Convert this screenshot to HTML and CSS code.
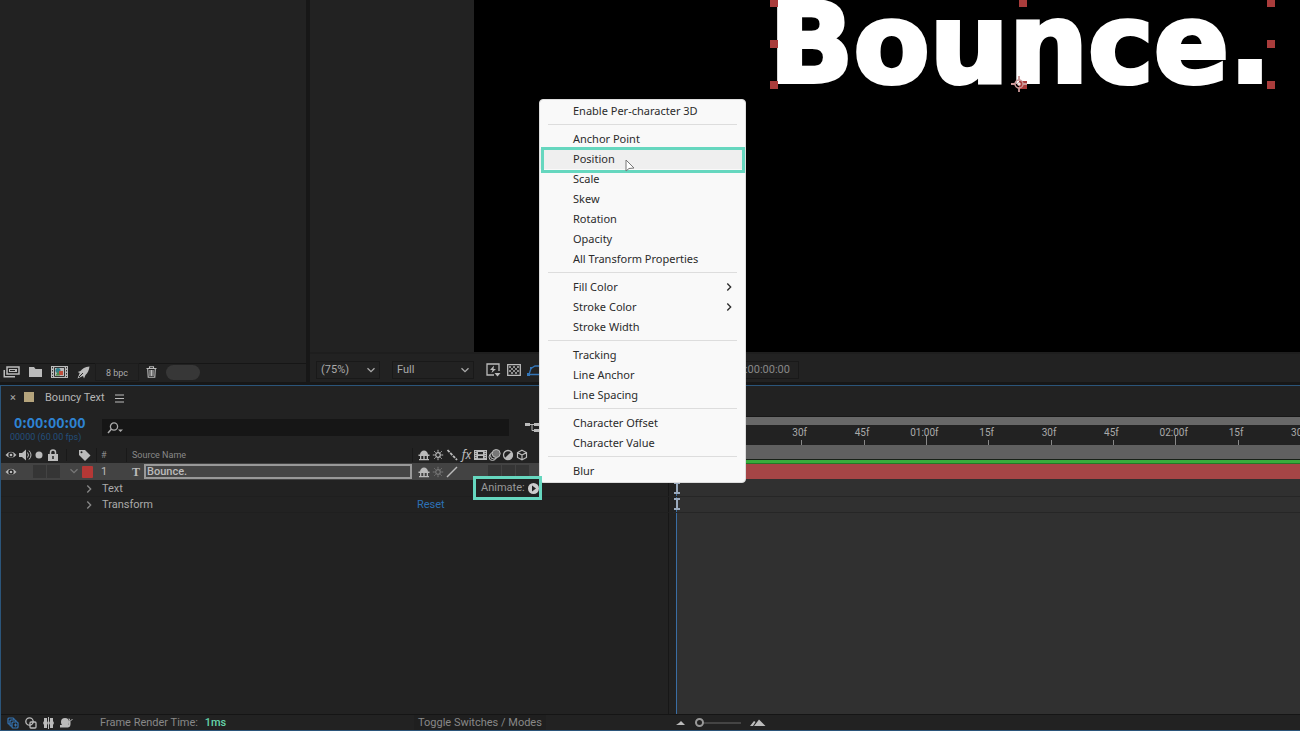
FILE: index.html
```html
<!DOCTYPE html>
<html lang="en">
<head>
<meta charset="utf-8">
<title>Bouncy Text</title>
<link rel="stylesheet" href="styles.css">
</head>
<body>
<svg class="defs" aria-hidden="true">
  <symbol id="eye" viewBox="0 0 12 12"><path d="M.5 6Q6-.5 11.500 6Q6 12 .5 6Z" fill="currentColor"/><circle cx="6" cy="6" r="2.700" fill="#222"/><circle cx="6" cy="6" r="1.300" fill="currentColor"/></symbol>
  <symbol id="shy" viewBox="0 0 12 12"><path d="M2 6C2 0 10 0 10 6ZM.5 5.500h11v1.500H.5ZM5.300 6h1.400v5H5.300ZM1 10h10v1.300H1ZM2 7h1.300v3H2ZM8.700 7H10v3H8.700Z" fill="currentColor"/></symbol>
  <symbol id="sun" viewBox="0 0 12 12"><circle cx="6" cy="6" r="2.300" fill="none" stroke="currentColor" stroke-width="1.200"/><path d="M6 .8v2M6 9.200v2M.8 6h2M9.200 6h2M2.300 2.300l1.300 1.300M8.400 8.400l1.300 1.300M9.700 2.300L8.400 3.600M3.600 8.400L2.300 9.700" stroke="currentColor"/></symbol>
  <symbol id="down" viewBox="0 0 10 10"><path d="M1.500 3.300L5 6.700l3.500-3.400" fill="none" stroke="currentColor" stroke-width="1.300"/></symbol>
  <symbol id="right" viewBox="0 0 10 10"><path d="M3.300 1.500L6.700 5 3.300 8.500" fill="none" stroke="currentColor" stroke-width="1.300"/></symbol>
  <symbol id="beam" viewBox="0 0 8 12"><path d="M1 1h6M1 11h6M4 1v10" stroke="currentColor" stroke-width="2"/></symbol>
</svg>
<div class="app">
  <section class="workspace">
    <aside class="project">
      <div class="project-list"></div>
      <div class="project-bar">
        <button class="icon" aria-label="Interpret footage"><svg width="17" height="12" viewBox="0 0 17 12"><path d="M4 1h12v7H4z" fill="none" stroke="currentColor" stroke-width="1.500"/><path d="M6 3h8v3H6zM2 4v6h10v1.500H.5V4Z" fill="currentColor"/><path d="M7 4.500h5" stroke="#222"/></svg></button>
        <button class="icon" aria-label="New folder"><svg width="13" height="12" viewBox="0 0 13 12"><path d="M0 1h5l1.500 2H13v8H0z" fill="currentColor"/></svg></button>
        <button class="icon" aria-label="New composition"><svg width="17" height="12" viewBox="0 0 17 12"><path d="M0 0h17v12H0z" fill="currentColor"/><path d="M1.500 1v10M15.500 1v10" stroke="#333" stroke-dasharray="1.500 1.500"/><path d="M3.500 1.500h10v9h-10z" fill="#bbb" stroke="#333"/><circle cx="7" cy="4.500" r="2.500" fill="#2f7f8b"/><path d="M8 5h4v4H8z" fill="#c24f3d"/><path d="M4.500 9.500l2.500-4 2 4z" fill="#4b8a4a"/></svg></button>
        <button class="icon" aria-label="Project settings"><svg width="13" height="13" viewBox="0 0 13 13"><path d="M12.500.5C8 .8 5 3 3.500 5L.7 6l2 1L.5 12.500 6 10l1 2.500L8.500 9C11 7 12 4 12.500.5Z" fill="currentColor"/><path d="M2 11l4-4" stroke="#222"/></svg></button>
        <button class="depth">8 bpc</button>
        <button class="icon" aria-label="Delete"><svg width="11" height="12" viewBox="0 0 11 12"><path d="M.5 2.500h10M3.500 2V.7h4V2M1.700 3l.5 8.300h6.600L9.300 3M4 4v6M5.500 4v6M7 4v6" fill="none" stroke="currentColor" stroke-width="1.100"/></svg></button>
        <span class="pill"></span>
      </div>
    </aside>
    <main class="viewer">
      <div class="stage">
        <div class="canvas">
          <div class="layer-box">
            <span class="title">Bounce.</span>
            <i class="handle tl"></i><i class="handle tc"></i><i class="handle tr"></i>
            <i class="handle ml"></i><i class="handle mr"></i>
            <i class="handle bl"></i><i class="handle bc"></i><i class="handle br"></i>
            <svg class="anchor" width="16" height="16" viewBox="0 0 16 16"><g fill="none" stroke="#c99"><circle cx="8" cy="8" r="4" stroke-width="1.500"/><circle cx="8" cy="8" r="1.500" fill="#fff"/><path d="M8 0v4M8 12v4M0 8h4M12 8h4" stroke-width="1.800"/></g></svg>
          </div>
        </div>
      </div>
      <div class="viewer-bar">
        <label class="drop zoom"><select aria-label="Magnification"><option>(75%)</option></select><svg width="10" height="10"><use href="#down"/></svg></label>
        <label class="drop res"><select aria-label="Resolution"><option>Full</option></select><svg width="10" height="10"><use href="#down"/></svg></label>
        <div class="tools">
          <button class="icon" aria-label="Fast previews"><svg width="15" height="14" viewBox="0 0 15 14"><path d="M8 12H1V1h12v7" fill="none" stroke="currentColor" stroke-width="1.300"/><path d="M8 2.500L4 7h2.500L5.500 10 10 6H7.500Z" fill="currentColor"/><path d="M8.500 10h6l-3 3.500z" fill="currentColor"/></svg></button>
          <button class="icon" aria-label="Transparency grid"><svg width="14" height="12" viewBox="0 0 14 12"><path d="M.7.700h12.600v10.600H.7z" fill="none" stroke="currentColor" stroke-width="1.300"/><path d="M2 2h2v2H2zM6 2h2v2H6zM10 2h2v2h-2zM4 4h2v2H4zM8 4h2v2H8zM2 6h2v2H2zM6 6h2v2H6zM10 6h2v2h-2zM4 8h2v2H4zM8 8h2v2H8z" fill="currentColor" opacity=".7"/></svg></button>
          <button class="icon blue" aria-label="Mask visibility"><svg width="14" height="12" viewBox="0 0 14 12"><path d="M2 10.500L4 4.500 8 2l5 0v8.500z" fill="none" stroke="currentColor" stroke-width="1.300"/><path d="M0 9h3v3H0zM3 3h2v2H3z" fill="currentColor"/></svg></button>
        </div>
        <button class="preview-time">0:00:00:00</button>
      </div>
    </main>
  </section>

  <section class="timeline">
    <div class="layers">
      <header class="tab">
        <button class="close" aria-label="Close tab">×</button>
        <span class="swatch"></span>
        <span class="comp-name">Bouncy Text</span>
        <button class="icon" aria-label="Panel menu"><svg width="9" height="9" viewBox="0 0 9 9"><path d="M0 1h9M0 4.500h9M0 8h9" stroke="currentColor" stroke-width="1.200"/></svg></button>
      </header>
      <div class="time-row">
        <div class="clock"><strong>0:00:00:00</strong><small>00000 (60.00 fps)</small></div>
        <label class="search"><svg width="16" height="12" viewBox="0 0 16 12"><circle cx="7" cy="4.500" r="3.600" fill="none" stroke="currentColor" stroke-width="1.300"/><path d="M4.500 7L1 11" stroke="currentColor" stroke-width="1.500"/><path d="M11 7.500h5L13.500 10z" fill="currentColor"/></svg><input type="text" aria-label="Search layers"></label>
        <button class="icon flow" aria-label="Mini flowchart"><svg width="16" height="13" viewBox="0 0 16 13"><path d="M0 2h5v3H0zM9 2h6v3H9zM9 8h6v3H9z" fill="currentColor"/><path d="M4 3.500h6M7 3.500V9.500h3" fill="none" stroke="currentColor"/></svg></button>
      </div>
      <div class="cols head">
        <div class="av">
          <svg width="12" height="12"><use href="#eye"/></svg>
          <svg width="13" height="12" viewBox="0 0 13 12"><path d="M0 4h3l4-3.500v11L3 8H0z" fill="currentColor"/><path d="M8.500 3.500q2 2.500 0 5M10 1.500q4 4.500 0 9" fill="none" stroke="currentColor"/></svg>
          <svg width="8" height="8" viewBox="0 0 8 8"><circle cx="4" cy="4" r="3.500" fill="currentColor"/></svg>
          <svg width="10" height="12" viewBox="0 0 10 12"><path d="M0 5h10v7H0z" fill="currentColor"/><path d="M2.500 5V3.500q0-2.500 2.500-2.500t2.500 2.500V5" fill="none" stroke="currentColor" stroke-width="1.500"/><path d="M5 7v3" stroke="#222" stroke-width="1.500"/></svg>
        </div>
        <div class="tag"><svg width="13" height="12" viewBox="0 0 13 12"><path d="M1 1h6l5.500 5.500L7 12 1 6z" fill="currentColor"/><circle cx="3.500" cy="3.300" r="1" fill="#222"/></svg></div>
        <div class="num small">#</div>
        <div class="name small">Source Name</div>
        <div class="switches">
          <svg width="12" height="12"><use href="#shy"/></svg>
          <svg width="12" height="12"><use href="#sun"/></svg>
          <svg width="12" height="12" viewBox="0 0 12 12"><path d="M1.500 1L11 11" stroke="currentColor" stroke-width="1.800" stroke-dasharray="3 1"/></svg>
          <em>fx</em>
          <svg width="13" height="12" viewBox="0 0 13 12"><path d="M0 1h13v10H0z" fill="currentColor"/><path d="M1.800 2v8M11.200 2v8" stroke="#333" stroke-dasharray="1 1"/><path d="M4 3h5v2.200H4zM4 7h5v2.200H4z" fill="#222"/></svg>
          <svg width="13" height="12" viewBox="0 0 13 12"><circle cx="4.500" cy="8" r="3.500" fill="none" stroke="currentColor"/><circle cx="6" cy="6.500" r="3.600" fill="#222" stroke="currentColor"/><circle cx="8.200" cy="4.500" r="4" fill="#777" stroke="currentColor"/></svg>
          <svg width="12" height="12" viewBox="0 0 12 12"><circle cx="6" cy="6" r="4.500" fill="#222" stroke="currentColor" stroke-width="1.300"/><path d="M9.300 2.700A4.600 4.600 0 0 1 2.700 9.300Z" fill="currentColor"/></svg>
          <svg width="12" height="12" viewBox="0 0 12 12"><path d="M6 1.200L10.500 3.500v5L6 10.800 1.500 8.500v-5zM1.500 3.500L6 6l4.500-2.500M6 6v5" fill="none" stroke="currentColor" stroke-width="1.200"/></svg>
        </div>
      </div>
      <div class="cols layer">
        <div class="av">
          <svg width="12" height="12"><use href="#eye"/></svg><i></i><i class="box"></i><i class="box"></i>
        </div>
        <div class="tag split"><svg class="dim" width="10" height="10"><use href="#down"/></svg><span class="label"></span></div>
        <div class="num">1</div>
        <div class="name"><b class="type">T</b><input class="rename" type="text" value="Bounce." aria-label="Layer name"></div>
        <div class="switches">
          <svg width="12" height="12"><use href="#shy"/></svg>
          <svg class="dim" width="12" height="12"><use href="#sun"/></svg>
          <svg width="12" height="12" viewBox="0 0 12 12"><path d="M1 11L11 1" stroke="currentColor" stroke-width="1.500"/></svg>
          <i></i><i></i><i class="box"></i><i class="box"></i><i class="box"></i>
        </div>
      </div>
      <div class="prop">
        <button class="twirl"><svg width="10" height="10"><use href="#right"/></svg>Text</button>
        <button class="animate">Animate: <svg width="11" height="11" viewBox="0 0 11 11"><circle cx="5.500" cy="5.500" r="5.500" fill="#ccc"/><path d="M4 2.500l4 3-4 3z" fill="#222"/></svg></button>
      </div>
      <div class="prop">
        <button class="twirl"><svg width="10" height="10"><use href="#right"/></svg>Transform</button>
        <a class="reset" href="#reset">Reset</a>
      </div>
    </div>

    <div class="track-area">
      <div class="spacer"></div>
      <div class="navigator"></div>
      <div class="ruler-wrap"><div class="ruler">
        <span>15f</span><span>30f</span><span>45f</span><span class="major">01:00f</span><span>15f</span><span>30f</span><span>45f</span><span class="major">02:00f</span><span>15f</span><span>30f</span>
      </div></div>
      <div class="work-area"></div>
      <div class="cached"></div>
      <div class="clip"></div>
      <div class="keys">
        <div class="key-row"><svg width="8" height="12"><use href="#beam"/></svg></div>
        <div class="key-row"><svg width="8" height="12"><use href="#beam"/></svg></div>
      </div>
    </div>

    <footer class="status">
      <div class="status-left">
        <div class="status-icons">
          <button class="icon blue" aria-label="Layer switches"><svg width="12" height="12" viewBox="0 0 12 12"><g fill="#222" stroke="currentColor" stroke-width="1.200"><rect x="1" y="1" width="6" height="6" rx="1"/><rect x="3" y="3" width="6" height="6" rx="1"/><rect x="5" y="5" width="6" height="6" rx="1"/></g><path d="M7 8h3M8.500 6.500v3" stroke="currentColor"/></svg></button>
          <button class="icon" aria-label="Transfer controls"><svg width="12" height="12" viewBox="0 0 12 12"><circle cx="4.500" cy="4.500" r="3.700" fill="none" stroke="currentColor" stroke-width="1.300"/><rect x="5" y="5" width="6" height="6" rx="1" fill="none" stroke="currentColor" stroke-width="1.300"/></svg></button>
          <button class="icon" aria-label="In and out"><svg width="11" height="12" viewBox="0 0 11 12"><path d="M1 1h3v3l1 2-1 2v3H1V8L0 6l1-2zM10 1H7v3L6 6l1 2v3h3V8l1-2-1-2z" fill="currentColor"/><path d="M5.500 0v12" stroke="currentColor"/></svg></button>
          <button class="icon" aria-label="Render time"><svg width="13" height="12" viewBox="0 0 13 12"><circle cx="5" cy="5" r="4" fill="currentColor"/><path d="M0 8h8q1-1 1-4h1.500v3q0 3-2.500 3.500H0z" fill="currentColor"/><path d="M10 4L9 1.500M10.500 4L12.500 2" stroke="currentColor"/></svg></button>
        </div>
        <span class="render">Frame Render Time: <b>1ms</b></span>
        <button class="toggle">Toggle Switches / Modes</button>
      </div>
      <div class="status-right">
        <svg width="10" height="6" viewBox="0 0 10 6"><path d="M0 5l3-2 2-2 4 4z" fill="currentColor"/></svg>
        <input type="range" min="0" max="100" value="0" aria-label="Timeline zoom">
        <svg width="16" height="8" viewBox="0 0 16 8"><path d="M0 7l4-5 1.500 1L3 7zM4 7l5-6.500L15.500 7z" fill="currentColor"/></svg>
      </div>
    </footer>
  </section>

  <div class="menu" role="menu">
    <button role="menuitem">Enable Per-character 3D</button>
    <hr>
    <button role="menuitem">Anchor Point</button>
    <button role="menuitem" class="current">Position</button>
    <button role="menuitem">Scale</button>
    <button role="menuitem">Skew</button>
    <button role="menuitem">Rotation</button>
    <button role="menuitem">Opacity</button>
    <button role="menuitem">All Transform Properties</button>
    <hr>
    <button role="menuitem">Fill Color<svg width="10" height="10"><use href="#right"/></svg></button>
    <button role="menuitem">Stroke Color<svg width="10" height="10"><use href="#right"/></svg></button>
    <button role="menuitem">Stroke Width</button>
    <hr>
    <button role="menuitem">Tracking</button>
    <button role="menuitem">Line Anchor</button>
    <button role="menuitem">Line Spacing</button>
    <hr>
    <button role="menuitem">Character Offset</button>
    <button role="menuitem">Character Value</button>
    <hr>
    <button role="menuitem">Blur</button>
    <svg class="pointer" width="10" height="14" viewBox="0 0 10 14"><path d="M1 1v11l3-2.500 5-.5z" fill="#fff" stroke="#777"/></svg>
  </div>
</div>
</body>
</html>
```
FILE: styles.css
```css
* { box-sizing: border-box; }
body { margin: 0; background: #222; color: #aaa; font: 11px/16px Roboto, "Noto Sans", sans-serif; }
button, input, select { margin: 0; padding: 0; border: 0; background: none; color: inherit; font: inherit; }
svg { display: block; flex: none; }
.defs { position: absolute; width: 0; height: 0; }
.icon { display: flex; align-items: center; justify-content: center; color: #bbb; }
.icon.blue { color: #3476b8; }

.app { position: relative; height: 100vh; display: grid; grid-template-rows: minmax(0, 385fr) minmax(0, 346fr); overflow: hidden; }

.workspace { display: flex; min-height: 0; background: #171717; gap: 4px; padding-bottom: 3px; }
.project { flex: 0 0 306px; display: flex; flex-direction: column; background: #222; }
.project-list { flex: 1; border-bottom: 1px solid #161616; }
.project-bar { height: 18px; display: flex; align-items: center; padding: 0 0 2px 3px; gap: 9px; }
.depth { width: 44px; height: 18px; margin: 0 -2px 0 -4px; border: 1px solid #1c1c1c; font-size: 9px; line-height: 18px; }
.pill { width: 34px; height: 15px; border-radius: 8px; background: #373737; }

.viewer { flex: 1; min-width: 0; display: flex; flex-direction: column; background: #222; }
.stage { flex: 1; min-height: 0; display: flex; padding-left: 164px; }
.canvas { flex: 1; display: flex; justify-content: flex-end; background: #000; }
.layer-box { position: relative; width: 497px; height: 82px; margin: 3px 29px 0 0; }
.title { display: block; color: #fff; font: 700 111px/82px "DejaVu Sans", sans-serif; white-space: nowrap; text-indent: -5px; -webkit-text-stroke: 4px #fff; }
.handle { position: absolute; width: 8px; height: 8px; margin: -4px; background: #a93c3b; }
.tl, .tc, .tr { top: 0; }
.ml, .mr { top: 50%; }
.bl, .bc, .br { top: 100%; }
.tl, .ml, .bl { left: 0; }
.tc, .bc { left: 50%; }
.tr, .mr, .br { left: 100%; }
.anchor { position: absolute; left: 50%; bottom: -7px; margin-left: -12px; }
.viewer-bar { height: 30px; display: flex; align-items: center; padding: 4px 0 0 6px; border-top: 2px solid #1e1e1e; }
.drop { position: relative; display: flex; align-items: center; height: 18px; border: 1px solid #191919; }
.drop select { appearance: none; width: 100%; padding-left: 4px; }
.drop svg { position: absolute; right: 3px; pointer-events: none; }
.zoom { width: 64px; margin-right: 12px; }
.res { width: 82px; margin-right: 12px; }
.tools { display: flex; gap: 6px; }
.preview-time { width: 64px; height: 18px; margin-left: 194px; border: 1px solid #191919; color: #888; font-size: 11px; text-align: right; padding-right: 8px; }

.timeline { min-height: 0; display: grid; grid-template-columns: 52% minmax(0, 1fr); grid-template-rows: minmax(0, 1fr) 16px; border: 1px solid #2b557a; border-right: 0; background: #222; }
.layers { min-width: 0; border-right: 7px solid #222; box-shadow: inset -1px 0 #171717; }
.tab { height: 24px; display: flex; align-items: center; padding-left: 8px; }
.close { width: 8px; }
.swatch { width: 10px; height: 10px; margin: -2px 11px 0 7px; background: #b5a47c; }
.comp-name { margin-right: 10px; color: #b5b5b5; }
.time-row { height: 37px; display: flex; align-items: center; padding-bottom: 2px; }
.clock { flex: 0 0 101px; padding-left: 9px; }
.clock strong { display: block; padding-left: 4px; color: #2e83d3; font: 700 14px/18px "Noto Sans CJK SC", sans-serif; }
.clock small { display: block; color: #234f7c; font-size: 9px; line-height: 12px; }
.search { flex: 0 0 407px; height: 17px; display: flex; align-items: center; padding-left: 5px; background: #161616; }
.search input { flex: 1; min-width: 0; outline: 0; }
.flow { margin-left: 16px; }

.cols { display: grid; grid-template-columns: 65px 30px 30px minmax(0, 1fr) 128px 129px; align-items: center; height: 16px; color: #bbb; }
.av { display: grid; grid-template-columns: repeat(4, 14px); padding-left: 3px; justify-items: center; align-items: center; }
.switches { display: grid; grid-template-columns: repeat(8, 14px); padding-left: 5px; justify-items: center; align-items: center; }
.switches em { font: italic 12px/14px "Noto Sans", sans-serif; }
.small { color: #888; font-size: 9px; line-height: 14px; }
.tag { display: flex; justify-content: center; padding-left: 6px; }
.split { padding-left: 0; gap: 3px; }
.label { width: 11px; height: 12px; background: #b53836; border-radius: 1px; }
.num { padding-left: 5px; }
.name { display: flex; align-items: center; padding-left: 6px; }
.head .tag, .head .num, .head .name, .head .switches { box-shadow: inset 1px 0 #191919; }
.layer { height: 17px; background: #434343; }
.box { width: 13px; height: 13px; background: #353535; }
.dim { color: #777; }
.type { width: 12px; font: 700 12px/14px "Liberation Serif", serif; }
.rename { flex: 1; min-width: 0; height: 15px; border: 2px solid #999; padding-left: 1px; color: #bbb; font-weight: 500; line-height: 11px; outline: 0; background: #454545; }
.prop { position: relative; height: 16px; display: flex; align-items: center; border-bottom: 1px solid #1f1f1f; }
.layer + .prop { margin-top: 1px; }
.twirl { display: flex; align-items: center; gap: 8px; padding-left: 83px; line-height: 15px; }
.twirl svg { color: #888; }
.reset { position: absolute; left: 416px; color: #2d71b5; text-decoration: none; line-height: 15px; }
.animate { position: absolute; z-index: 3; left: 472px; top: -5px; width: 69px; height: 24px; display: flex; align-items: center; justify-content: space-between; border: 3px solid #66d7bf; padding: 0 0 0 5px; background: #222; color: #999; white-space: nowrap; }

.track-area { min-width: 0; display: flex; flex-direction: column; background: #303030; }
.spacer { height: 31px; background: #222; border-bottom: 1px solid #181818; }
.navigator { height: 8px; background: #686868; }
.ruler-wrap { height: 20px; overflow: hidden; background: #222; }
.ruler { display: grid; grid-template-columns: repeat(10, 10%); width: 100%; margin-left: 5%; height: 20px; }
.ruler span { position: relative; display: flex; justify-content: center; padding-right: 3px; font-size: 10px; line-height: 16px; }
.ruler span::after { content: ""; position: absolute; left: 50%; bottom: 0; width: 1px; height: 5px; background: #888; }
.ruler .major::after { height: 9px; }
.work-area { height: 14px; background: #606060; }
.cached { height: 5px; border-top: 1px solid #172117; border-bottom: 1px solid #227a27; background: #38ac3c; }
.clip { height: 15px; background: #a54546; }
.keys { flex: 1; padding-top: 2px; border-left: 1px solid #3a6ea5; }
.key-row { height: 16px; margin-left: -4px; padding-top: 1px; border-bottom: 1px solid #262626; color: #9aaabd; }

.status { grid-column: 1 / -1; display: grid; grid-template-columns: 52% minmax(0, 1fr); border-top: 1px solid #151515; background: #222; line-height: 15px; color: #888; }
.status-left { display: flex; align-items: center; min-width: 0; }
.status-icons { display: flex; gap: 6px; width: 99px; padding-left: 6px; }
.render { flex: 0 0 314px; }
.render b { margin-left: 4px; color: #65d4aa; font-weight: 500; }
.toggle { padding: 0 4px; line-height: 15px; background: #1f1f1f; }
.status-right { display: flex; align-items: center; gap: 9px; color: #bbb; }
.status-right input { appearance: none; width: 46px; height: 9px; background: linear-gradient(#444, #444) center / 100% 2px no-repeat; }
.status-right input::-webkit-slider-thumb { appearance: none; width: 9px; height: 9px; border: 2px solid #999; border-radius: 50%; background: #222; }

.menu { position: absolute; z-index: 2; left: 539px; top: 99px; width: 207px; padding: 1px 0; border: 1px solid #ddd; border-radius: 4px; background: #f9f9f9; color: #2b2b2b; font: 11px/16px "Noto Sans", "Open Sans", sans-serif; }
.menu button { position: relative; display: flex; align-items: center; justify-content: space-between; width: 100%; height: 20px; padding: 0 11px 0 33px; }
.menu hr { height: 1px; margin: 3px 8px 4px; border: 0; background: #ddd; }
.menu .current { background: #efefef; }
.menu .current::after { content: ""; position: absolute; inset: -2px 0 -4px 1px; border: 3px solid #66d7bf; }
.pointer { position: absolute; left: 85px; top: 59px; }
```
